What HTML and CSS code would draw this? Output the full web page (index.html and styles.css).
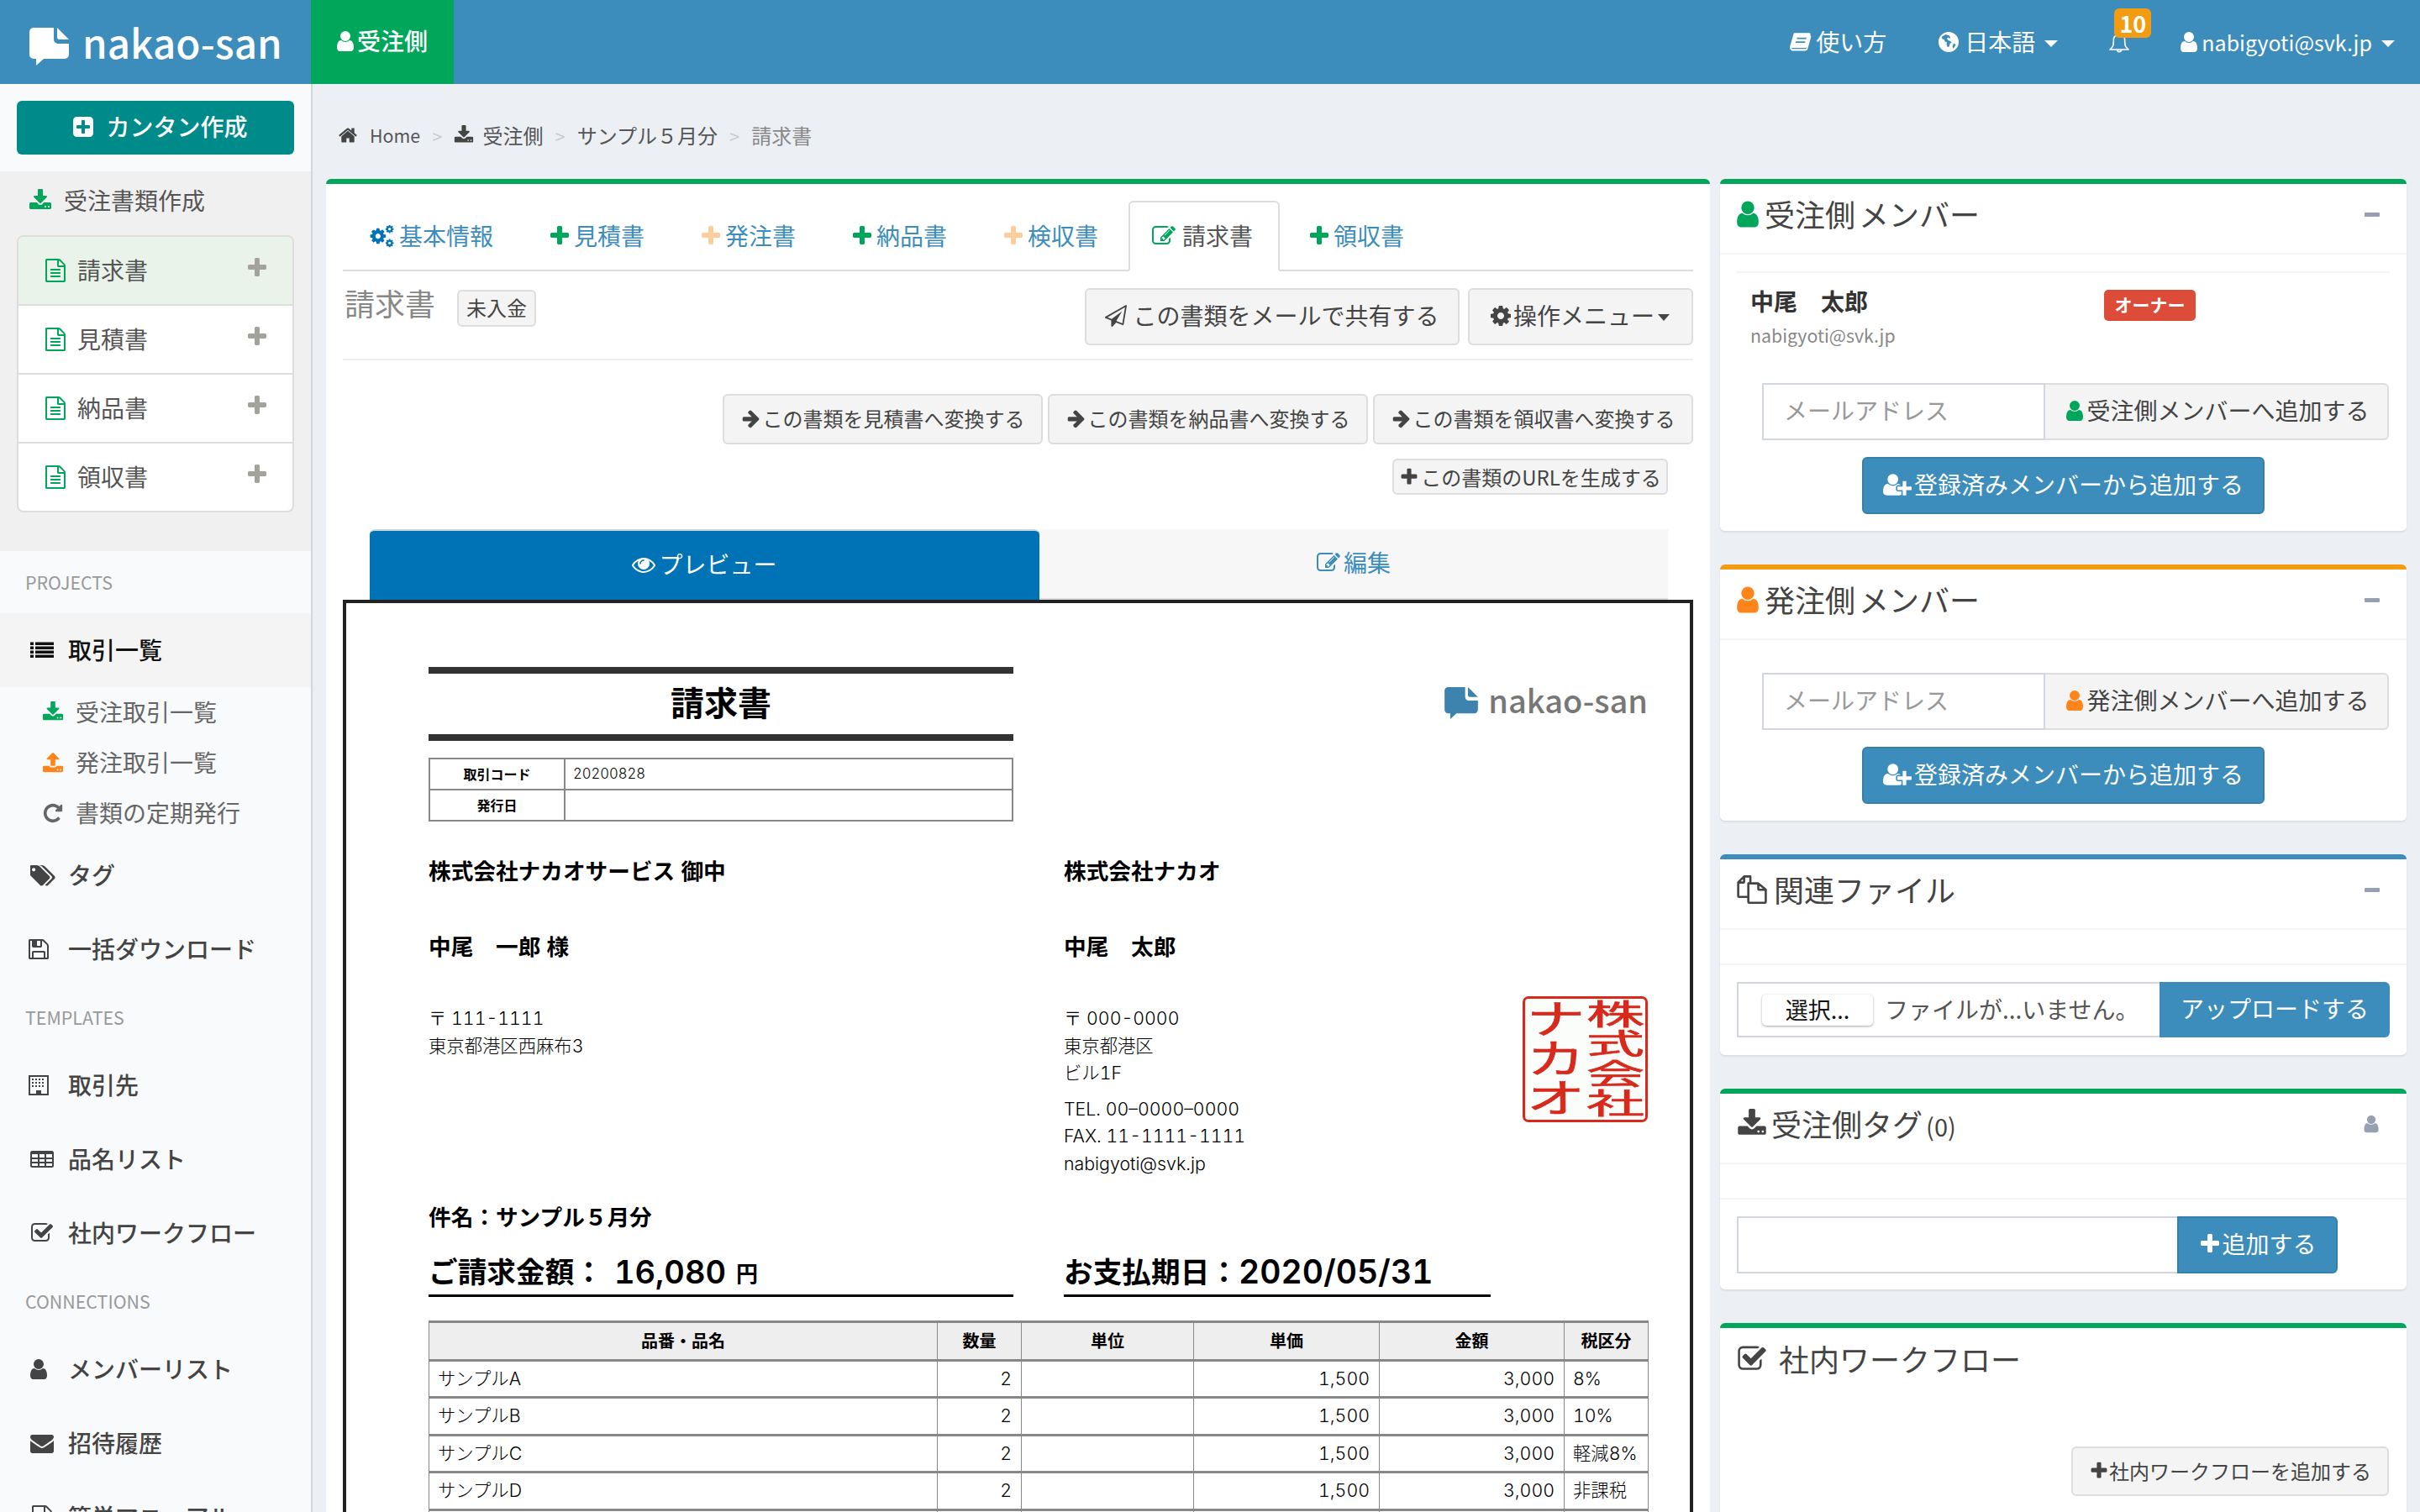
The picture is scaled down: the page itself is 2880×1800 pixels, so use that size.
FILE: index.html
```html
<!DOCTYPE html>
<html lang="ja">
<head>
<meta charset="utf-8">
<title>nakao-san</title>
<link rel="stylesheet" href="styles.css">
</head>
<body>
<svg class="sprite" xmlns="http://www.w3.org/2000/svg">
<symbol id="user" viewBox="0 0 1792 1792"><path d="M1536 1399q0 109-62.500 187t-150.500 78h-854q-88 0-150.500-78t-62.500-187q0-85 8.500-160.500t31.500-152 58.500-131 94-89 134.500-34.500q131 128 313 128t313-128q76 0 134.500 34.500t94 89 58.500 131 31.500 152 8.500 160.500zm-256-887q0 159-112.500 271.500t-271.500 112.500-271.500-112.500-112.500-271.500 112.500-271.500 271.500-112.500 271.500 112.500 112.500 271.500z"/></symbol>
<symbol id="plus" viewBox="0 0 1792 1792"><path d="M1600 736v192q0 40-28 68t-68 28h-416v416q0 40-28 68t-68 28h-192q-40 0-68-28t-28-68v-416h-416q-40 0-68-28t-28-68v-192q0-40 28-68t68-28h416v-416q0-40 28-68t68-28h192q40 0 68 28t28 68v416h416q40 0 68 28t28 68z"/></symbol>
<symbol id="arrow" viewBox="0 0 1792 1792"><path d="M1600 960q0 54-37 91l-651 651q-39 37-91 37-51 0-90-37l-75-75q-38-38-38-91t38-91l293-293h-704q-52 0-84.500-37.500t-32.500-90.500v-128q0-53 32.500-90.500t84.500-37.500h704l-293-294q-38-36-38-90t38-90l75-75q38-38 90-38 53 0 91 38l651 651q37 35 37 90z"/></symbol>
<symbol id="home" viewBox="0 0 1792 1792"><path d="M1472 992v480q0 26-19 45t-45 19h-384v-384h-256v384h-384q-26 0-45-19t-19-45v-480q0-1 .5-3t.5-3l575-474 575 474q1 2 1 6zm223-69l-62 74q-8 9-21 11h-3q-13 0-21-7l-692-577-692 577q-12 8-24 7-13-2-21-11l-62-74q-8-10-7-23.500t11-21.500l719-599q32-26 76-26t76 26l244 204v-195q0-14 9-23t23-9h192q14 0 23 9t9 23v408l219 182q10 8 11 21.500t-7 23.500z"/></symbol>
<symbol id="download" viewBox="0 0 1792 1792"><path d="M1344 1344q0-26-19-45t-45-19-45 19-19 45 19 45 45 19 45-19 19-45zm256 0q0-26-19-45t-45-19-45 19-19 45 19 45 45 19 45-19 19-45zm128-224v320q0 40-28 68t-68 28h-1472q-40 0-68-28t-28-68v-320q0-40 28-68t68-28h465l135 136q58 56 136 56t136-56l136-136h464q40 0 68 28t28 68zm-325-569q17 41-14 70l-448 448q-18 19-45 19t-45-19l-448-448q-31-29-14-70 17-39 59-39h256v-448q0-26 19-45t45-19h256q26 0 45 19t19 45v448h256q42 0 59 39z"/></symbol>
<symbol id="upload" viewBox="0 0 1792 1792"><path d="M1344 1472q0-26-19-45t-45-19-45 19-19 45 19 45 45 19 45-19 19-45zm256 0q0-26-19-45t-45-19-45 19-19 45 19 45 45 19 45-19 19-45zm128-224v320q0 40-28 68t-68 28h-1472q-40 0-68-28t-28-68v-320q0-40 28-68t68-28h427q21 56 70.500 92t110.500 36h256q61 0 110.500-36t70.500-92h427q40 0 68 28t28 68zm-325-648q-17 40-59 40h-256v448q0 26-19 45t-45 19h-256q-26 0-45-19t-19-45v-448h-256q-42 0-59-40-17-39 14-69l448-448q18-19 45-19t45 19l448 448q31 30 14 69z"/></symbol>
<symbol id="list" viewBox="0 0 1792 1792"><path d="M0 288h256v224H0zM384 288h1408v224H384zM0 608h256v224H0zM384 608h1408v224H384zM0 928h256v224H0zM384 928h1408v224H384zM0 1248h256v224H0zM384 1248h1408v224H384z"/></symbol>
<symbol id="repeat" viewBox="0 0 1792 1792"><path d="M1664 256v448q0 26-19 45t-45 19h-448q-42 0-59-40-17-39 14-69l138-138q-148-137-349-137-104 0-198.500 40.500t-163.500 109.500-109.500 163.500-40.500 198.500 40.500 198.500 109.500 163.500 163.500 109.500 198.500 40.500q119 0 225-52t179-147q7-10 23-12 15 0 25 9l137 138q9 8 9.500 20.500t-7.500 22.500q-109 132-264 204.500t-327 72.500q-156 0-298-61t-245-164-164-245-61-298 61-298 164-245 245-164 298-61q147 0 284.500 55.500t244.500 156.500l130-129q29-31 70-14 39 17 39 59z"/></symbol>
<symbol id="tags" viewBox="0 0 1920 1792"><path d="M384 448q0-53-37.500-90.500t-90.500-37.500-90.500 37.500-37.500 90.500 37.500 90.500 90.500 37.500 90.500-37.500 37.500-90.500zm1067 576q0 53-37 90l-491 492q-39 37-91 37-53 0-90-37l-715-716q-38-37-64.500-101t-26.500-117v-416q0-52 38-90t90-38h416q53 0 117 26.500t102 64.500l715 714q37 39 37 91zm384 0q0 53-37 90l-491 492q-39 37-91 37-36 0-59-14t-53-45l470-470q37-37 37-90 0-52-37-91l-715-714q-38-38-102-64.500t-117-26.500h224q53 0 117 26.500t102 64.500l715 714q37 39 37 91z"/></symbol>
<symbol id="save" viewBox="0 0 1792 1792"><path d="M512 1536h768v-384h-768v384zm896 0h128v-896q0-14-10-38.500t-20-34.500l-281-281q-10-10-34-20t-39-10v416q0 40-28 68t-68 28h-576q-40 0-68-28t-28-68v-416h-128v1280h128v-416q0-40 28-68t68-28h832q40 0 68 28t28 68v416zm-384-928v-320q0-13-9.500-22.500t-22.500-9.500h-192q-13 0-22.500 9.500t-9.500 22.500v320q0 13 9.500 22.500t22.500 9.500h192q13 0 22.500-9.500t9.500-22.500zm640 32v928q0 40-28 68t-68 28h-1344q-40 0-68-28t-28-68v-1344q0-40 28-68t68-28h928q40 0 88 20t76 48l280 280q28 28 48 76t20 88z"/></symbol>
<symbol id="building" viewBox="0 0 1792 1792"><path fill-rule="evenodd" d="M128 128h1536v1536H128zM256 256v1280h448v-256h384v256h448V256zM384 384h128v128H384zM640 384h128v128H640zM896 384h128v128H896zM1152 384h128v128h-128zM384 640h128v128H384zM640 640h128v128H640zM896 640h128v128H896zM1152 640h128v128h-128zM384 896h128v128H384zM640 896h128v128H640zM896 896h128v128H896zM1152 896h128v128h-128z"/></symbol>
<symbol id="table" viewBox="0 0 1792 1792"><path fill-rule="evenodd" d="M160 256h1472q160 0 160 160v960q0 160-160 160H160q-160 0-160-160V416q0-160 160-160zM128 512v256h448V512zM704 512v256h384V512zM1216 512v256h448V512zM128 896v192h448V896zM704 896v192h384V896zM1216 896v192h448V896zM128 1216v192h448v-192zM704 1216v192h384v-192zM1216 1216v192h448v-192z"/></symbol>
<symbol id="check" viewBox="0 0 1792 1792"><path d="M1472 930v318q0 119-84.500 203.500t-203.500 84.500h-832q-119 0-203.500-84.500t-84.500-203.500v-832q0-119 84.500-203.500t203.500-84.500h832q63 0 117 25 15 7 18 23 3 17-9 29l-49 49q-10 10-23 10-3 0-9-2-23-6-45-6h-832q-66 0-113 47t-47 113v832q0 66 47 113t113 47h832q66 0 113-47t47-113v-254q0-13 9-22l64-64q10-10 23-10 6 0 12 3 20 8 20 29zm231-489l-814 814q-24 24-57 24t-57-24l-430-430q-24-24-24-57t24-57l110-110q24-24 57-24t57 24l263 263 647-647q24-24 57-24t57 24l110 110q24 24 24 57t-24 57z"/></symbol>
<symbol id="envelope" viewBox="0 0 1792 1792"><path d="M1792 710v794q0 66-47 113t-113 47h-1472q-66 0-113-47t-47-113v-794q44 49 101 87 362 246 497 345 57 42 92.500 65.500t94.500 48 110 24.500h2q51 0 110-24.500t94.500-48 92.500-65.500q170-123 498-345 57-39 100-87zm0-294q0 79-49 151t-122 123q-376 261-468 325-10 7-42.500 30.500t-54 38-52 32.500-57.500 27-50 9h-2q-23 0-50-9t-57.500-27-52-32.500-54-38-42.500-30.500q-91-64-262-182.500t-205-142.500q-62-42-117-115.500t-55-136.500q0-78 41.500-130t118.500-52h1472q65 0 112.500 47t47.500 113z"/></symbol>
<symbol id="gear" viewBox="0 0 1792 1792"><path d="M1152 896q0-106-75-181t-181-75-181 75-75 181 75 181 181 75 181-75 75-181zm512-109v222q0 12-8 23t-20 13l-185 28q-19 54-39 91 35 50 107 138 10 12 10 25t-9 23q-27 37-99 108t-94 71q-12 0-26-9l-138-108q-44 23-91 38-16 136-29 186-7 28-36 28h-222q-14 0-24.500-8.500t-11.500-21.500l-28-184q-49-16-90-37l-141 107q-10 9-25 9-14 0-25-11-126-114-165-168-7-10-7-23 0-12 8-23 15-21 51-66.500t54-70.500q-27-50-41-99l-183-27q-13-2-21-12.500t-8-23.500v-222q0-12 8-23t19-13l186-28q14-46 39-92-40-57-107-138-10-12-10-24 0-10 9-23 26-36 98.500-107.500t94.500-71.500q13 0 26 10l138 107q44-23 91-38 16-136 29-186 7-28 36-28h222q14 0 24.500 8.500t11.500 21.500l28 184q49 16 90 37l142-107q9-9 24-9 13 0 25 10 129 119 165 170 7 8 7 22 0 12-8 23-15 21-51 66.500t-54 70.500q26 50 41 98l183 28q13 2 21 12.500t8 23.500z"/></symbol>
<symbol id="cogs" viewBox="0 0 1920 1792"><use href="#gear" width="1300" height="1300" x="0" y="250"/><use href="#gear" width="680" height="680" x="1140" y="60"/><use href="#gear" width="680" height="680" x="1140" y="1060"/></symbol>
<symbol id="file" viewBox="0 0 1792 1792"><path d="M1596 380q28 28 48 76t20 88v1152q0 40-28 68t-68 28h-1344q-40 0-68-28t-28-68v-1600q0-40 28-68t68-28h896q40 0 88 20t76 48zm-444-244v376h376q-10-29-22-41l-313-313q-12-12-41-22zm384 1528v-1024h-416q-40 0-68-28t-28-68v-416h-768v1536h1280zm-1024-864q0-14 9-23t23-9h704q14 0 23 9t9 23v64q0 14-9 23t-23 9h-704q-14 0-23-9t-9-23v-64zm736 224q14 0 23 9t9 23v64q0 14-9 23t-23 9h-704q-14 0-23-9t-9-23v-64q0-14 9-23t23-9h704zm0 256q14 0 23 9t9 23v64q0 14-9 23t-23 9h-704q-14 0-23-9t-9-23v-64q0-14 9-23t23-9h704z"/></symbol>
<symbol id="edit" viewBox="0 0 1792 1792"><path d="M888 1184l116-116-152-152-116 116v56h96v96h56zm440-720q-16-16-33 1l-350 350q-17 17-1 33t33-1l350-350q17-17 1-33zm80 594v190q0 119-84.500 203.500t-203.500 84.500h-832q-119 0-203.500-84.500t-84.500-203.500v-832q0-119 84.500-203.500t203.500-84.500h832q63 0 117 25 15 7 18 23 3 17-9 29l-49 49q-14 14-32 8-23-6-45-6h-832q-66 0-113 47t-47 113v832q0 66 47 113t113 47h832q66 0 113-47t47-113v-126q0-13 9-22l64-64q15-15 35-7t20 29zm-96-738l288 288-672 672h-288v-288zm444 132l-92 92-288-288 92-92q27-27 68-27t68 27l152 152q27 27 27 68t-27 68z"/></symbol>
<symbol id="plane" viewBox="0 0 1792 1792"><path d="M1764 11q33 24 27 64l-256 1536q-5 29-32 45-14 8-31 8-11 0-24-5l-527-215-298 327q-18 21-47 21-14 0-23-4-19-7-30-23.500t-11-36.500v-452l-472-193q-37-14-40-55-3-39 32-59l1664-960q35-21 68 2zm-342 1499l221-1323-1434 827 336 137 863-639-478 797z"/></symbol>
<symbol id="eye" viewBox="0 0 1792 1792"><path d="M1664 960q-152-236-381-353 61 104 61 225 0 185-131.500 316.500t-316.500 131.500-316.500-131.500-131.500-316.500q0-121 61-225-229 117-381 353 133 205 333.500 326.500t434.500 121.500 434.500-121.500 333.500-326.500zm-720-384q0-20-14-34t-34-14q-125 0-214.500 89.500t-89.500 214.500q0 20 14 34t34 14 34-14 14-34q0-86 61-147t147-61q20 0 34-14t14-34zm848 384q0 34-20 69-140 230-376.500 368.500t-499.500 138.500-499.500-139-376.500-368q-20-35-20-69t20-69q140-229 376.500-368t499.500-139 499.500 139 376.500 368q20 35 20 69z"/></symbol>
<symbol id="plus-square" viewBox="0 0 1792 1792"><path d="M1408 960v-128q0-26-19-45t-45-19h-320v-320q0-26-19-45t-45-19h-128q-26 0-45 19t-19 45v320h-320q-26 0-45 19t-19 45v128q0 26 19 45t45 19h320v320q0 26 19 45t45 19h128q26 0 45-19t19-45v-320h320q26 0 45-19t19-45zm256-544v960q0 119-84.500 203.500t-203.500 84.500h-960q-119 0-203.500-84.500t-84.500-203.500v-960q0-119 84.500-203.500t203.500-84.500h960q119 0 203.500 84.500t84.500 203.500z"/></symbol>
<symbol id="user-plus" viewBox="0 0 2048 1792"><path d="M704 896q-159 0-271.500-112.500t-112.500-271.500 112.500-271.500 271.500-112.500 271.500 112.500 112.500 271.500-112.500 271.500-271.500 112.500zm960 128h352q13 0 22.500 9.500t9.500 22.500v192q0 13-9.500 22.500t-22.500 9.500h-352v352q0 13-9.500 22.500t-22.500 9.500h-192q-13 0-22.500-9.500t-9.500-22.500v-352h-352q-13 0-22.500-9.500t-9.500-22.500v-192q0-13 9.500-22.500t22.500-9.500h352v-352q0-13 9.500-22.500t22.500-9.500h192q13 0 22.500 9.500t9.500 22.500v352zm-736 224q0 52 38 90t90 38h256v238q-68 50-171 50h-874q-121 0-194-69.500t-73-189.500q0-53 3.500-103.500t14-109 26.500-108.500 43-97.500 62-81 85.500-53.500 111.500-20q19 0 39 17 79 61 154.500 91.500t164.500 30.500 164.500-30.500 154.500-91.500q20-17 39-17 132 0 217 96h-223q-52 0-90 38t-38 90v192z"/></symbol>
<symbol id="book" viewBox="0 0 1792 1792"><path d="M420 210h1120q70 0 90 40t0 100l-260 900q-30 100-130 100H260q-40 0-55 30t20 50l1040 0q50 0 70-50l290-990q60 30 60 110l-260 930q-40 130-170 130H260q-130 0-170-130t0-240l240-830q30-150 90-150zM620 560l-30 110h720l30-110zM530 850l-30 110h720l30-110z"/></symbol>
<symbol id="globe" viewBox="0 0 1792 1792"><path fill-rule="evenodd" d="M896 128a768 768 0 1 1 0 1536a768 768 0 0 1 0-1536zM700 320q-200 60-340 210l60 140 140 40 60 150 150 70-30 170 90 200 110-70 60-210 130-110-140-90-130-60-90-130 110-80 70 70 80-50-60-150-120-40zM1300 1000l-110 180 40 210q150-110 210-300z"/></symbol>
<symbol id="bell" viewBox="0 0 1792 1792"><path fill="none" stroke="currentColor" stroke-width="110" stroke-linejoin="round" d="M896 180q-110 0-120 130-340 80-340 420 0 400-80 560-50 90-230 230h1540q-180-140-230-230-80-160-80-560 0-340-340-420-10-130-120-130z"/><path fill="none" stroke="currentColor" stroke-width="110" d="M720 1520a176 176 0 0 0 352 0"/></symbol>
<symbol id="files" viewBox="0 0 1792 1792"><path fill="none" stroke="currentColor" stroke-width="130" stroke-linejoin="round" d="M800 530V120H430L80 470v800q0 60 60 60h540M800 120v0M430 120v300q0 60-60 60H80M800 530h470L1712 900v720q0 60-60 60H740q-60 0-60-60V530zM1270 530v320q0 60 60 60h382"/></symbol>
</svg>

<header class="topbar">
  <a class="brand">
    <svg class="brand-mark" viewBox="0 0 47 45"><path d="M5 0H29V14a5 5 0 0 0 5 5H47V32a5 5 0 0 1-5 5H17L8 45V37H5a5 5 0 0 1-5-5V5a5 5 0 0 1 5-5Z"/><path d="M33 0 47 14H36a3 3 0 0 1-3-3Z"/></svg>
    <span class="brand-name">nakao-san</span>
  </a>
  <a class="side-tab"><svg class="i nudge"><use href="#user"/></svg><span>受注側</span></a>
  <nav class="top-menu">
    <a class="top-item"><svg class="i book-ic"><use href="#book"/></svg><span>使い方</span></a>
    <a class="top-item"><svg class="i globe-ic"><use href="#globe"/></svg><span>日本語</span><i class="caret"></i></a>
    <a class="top-item bell"><svg class="i bell-ic"><use href="#bell"/></svg><span class="bell-badge">10</span></a>
    <a class="top-item"><svg class="i nudge"><use href="#user"/></svg><span class="top-mail">nabigyoti@svk.jp</span><i class="caret"></i></a>
  </nav>
</header>

<div class="layout">
  <aside class="sidebar">
    <div class="create-wrap"><a class="create-btn"><svg class="i"><use href="#plus-square"/></svg><span>カンタン作成</span></a></div>
    <div class="doc-menu">
      <div class="doc-menu-title"><svg class="i green"><use href="#download"/></svg><span>受注書類作成</span></div>
      <ul class="doc-list">
        <li class="doc-item current"><svg class="i green"><use href="#file"/></svg><span>請求書</span><svg class="i doc-plus"><use href="#plus"/></svg></li>
        <li class="doc-item"><svg class="i green"><use href="#file"/></svg><span>見積書</span><svg class="i doc-plus"><use href="#plus"/></svg></li>
        <li class="doc-item"><svg class="i green"><use href="#file"/></svg><span>納品書</span><svg class="i doc-plus"><use href="#plus"/></svg></li>
        <li class="doc-item"><svg class="i green"><use href="#file"/></svg><span>領収書</span><svg class="i doc-plus"><use href="#plus"/></svg></li>
      </ul>
    </div>
    <div class="nav-label">PROJECTS</div>
    <a class="nav-row active"><span class="nav-ic"><svg class="i"><use href="#list"/></svg></span><span>取引一覧</span></a>
    <a class="sub-row"><span class="sub-ic green"><svg class="i"><use href="#download"/></svg></span><span>受注取引一覧</span></a>
    <a class="sub-row"><span class="sub-ic orange"><svg class="i"><use href="#upload"/></svg></span><span>発注取引一覧</span></a>
    <a class="sub-row"><span class="sub-ic"><svg class="i"><use href="#repeat"/></svg></span><span>書類の定期発行</span></a>
    <a class="nav-row"><span class="nav-ic"><svg class="i tag-ic"><use href="#tags"/></svg></span><span>タグ</span></a>
    <a class="nav-row"><span class="nav-ic"><svg class="i nudge-s"><use href="#save"/></svg></span><span>一括ダウンロード</span></a>
    <div class="nav-label">TEMPLATES</div>
    <a class="nav-row"><span class="nav-ic"><svg class="i nudge-s"><use href="#building"/></svg></span><span>取引先</span></a>
    <a class="nav-row"><span class="nav-ic"><svg class="i"><use href="#table"/></svg></span><span>品名リスト</span></a>
    <a class="nav-row"><span class="nav-ic"><svg class="i"><use href="#check"/></svg></span><span>社内ワークフロー</span></a>
    <div class="nav-label">CONNECTIONS</div>
    <a class="nav-row"><span class="nav-ic"><svg class="i nudge"><use href="#user"/></svg></span><span>メンバーリスト</span></a>
    <a class="nav-row"><span class="nav-ic"><svg class="i"><use href="#envelope"/></svg></span><span>招待履歴</span></a>
    <a class="nav-row"><span class="nav-ic"><svg class="i"><use href="#file"/></svg></span><span>簡単マニュアル</span></a>
  </aside>

  <main class="main">
    <div class="crumbs">
      <svg class="i crumb-home"><use href="#home"/></svg><span class="crumb-latin">Home</span><b class="sep">&gt;</b>
      <svg class="i crumb-dl"><use href="#download"/></svg><span>受注側</span><b class="sep">&gt;</b>
      <span>サンプル５月分</span><b class="sep">&gt;</b>
      <span class="crumb-last">請求書</span>
    </div>
    <div class="columns">
      <section class="panel">
        <ul class="tabs">
          <li class="tab"><svg class="i cogs-ic"><use href="#cogs"/></svg><span>基本情報</span></li>
          <li class="tab"><svg class="i green"><use href="#plus"/></svg><span>見積書</span></li>
          <li class="tab"><svg class="i peach"><use href="#plus"/></svg><span>発注書</span></li>
          <li class="tab"><svg class="i green"><use href="#plus"/></svg><span>納品書</span></li>
          <li class="tab"><svg class="i peach"><use href="#plus"/></svg><span>検収書</span></li>
          <li class="tab on"><svg class="i green edit-ic"><use href="#edit"/></svg><span>請求書</span></li>
          <li class="tab"><svg class="i green"><use href="#plus"/></svg><span>領収書</span></li>
        </ul>
        <div class="title-row">
          <div class="title-left"><h2 class="doc-title">請求書</h2><span class="state">未入金</span></div>
          <div class="title-actions">
            <a class="btn btn-share"><svg class="i"><use href="#plane"/></svg><span>この書類をメールで共有する</span></a>
            <a class="btn btn-menu"><svg class="i"><use href="#gear"/></svg><span>操作メニュー</span><i class="caret dark"></i></a>
          </div>
        </div>
        <div class="convert-row">
          <a class="btn btn-conv"><svg class="i"><use href="#arrow"/></svg><span>この書類を見積書へ変換する</span></a>
          <a class="btn btn-conv"><svg class="i"><use href="#arrow"/></svg><span>この書類を納品書へ変換する</span></a>
          <a class="btn btn-conv"><svg class="i"><use href="#arrow"/></svg><span>この書類を領収書へ変換する</span></a>
        </div>
        <div class="url-row"><a class="btn btn-url"><svg class="i"><use href="#plus"/></svg><span>この書類のURLを生成する</span></a></div>
        <div class="view-tabs">
          <a class="view-tab preview"><svg class="i"><use href="#eye"/></svg><span>プレビュー</span></a>
          <a class="view-tab editing"><svg class="i"><use href="#edit"/></svg><span>編集</span></a>
        </div>
        <article class="sheet">
          <div class="sheet-head">
            <div>
              <h1 class="sheet-title">請求書</h1>
              <table class="meta">
                <tr><th>取引コード</th><td>20200828</td></tr>
                <tr><th>発行日</th><td></td></tr>
              </table>
            </div>
            <div class="sheet-logo">
              <svg class="sheet-mark" viewBox="0 0 47 45"><path d="M5 0H29V14a5 5 0 0 0 5 5H47V32a5 5 0 0 1-5 5H17L8 45V37H5a5 5 0 0 1-5-5V5a5 5 0 0 1 5-5Z"/><path d="M33 0 47 14H36a3 3 0 0 1-3-3Z"/></svg>
              <span>nakao-san</span>
            </div>
          </div>
          <div class="parties">
            <div>
              <p class="strong company">株式会社ナカオサービス 御中</p>
              <p class="strong person">中尾　一郎 様</p>
              <p class="addr">〒 111-1111<br>東京都港区西麻布3</p>
            </div>
            <div>
              <p class="strong company">株式会社ナカオ</p>
              <p class="strong person">中尾　太郎</p>
              <div class="sender">
                <div>
                  <p class="addr">〒 000-0000<br>東京都港区<br>ビル1F</p>
                  <p class="addr tel">TEL. 00–0000–0000<br>FAX. 11-1111-1111<br>nabigyoti@svk.jp</p>
                </div>
                <svg class="stamp" viewBox="0 0 149 150">
                  <g class="stamp-l">
                    <text transform="translate(2 43) scale(1.5 1)">ナ</text>
                    <text transform="translate(2 92) scale(1.5 1)">カ</text>
                    <text transform="translate(2 141) scale(1.5 1)">オ</text>
                  </g>
                  <g class="stamp-r">
                    <text transform="translate(76 32) scale(2 1)">株</text>
                    <text transform="translate(76 69) scale(2 1)">式</text>
                    <text transform="translate(76 106) scale(2 1)">会</text>
                    <text transform="translate(76 143) scale(2 1)">社</text>
                  </g>
                </svg>
              </div>
            </div>
          </div>
          <p class="strong subject">件名：サンプル５月分</p>
          <div class="totals">
            <div class="total"><span>ご請求金額：</span><span class="num amount">16,080</span><span class="yen">円</span></div>
            <div class="total due"><span>お支払期日：</span><span class="num">2020/05/31</span></div>
          </div>
          <table class="items">
            <colgroup><col class="c1"><col class="c2"><col class="c3"><col class="c4"><col class="c5"><col class="c6"></colgroup>
            <tr><th>品番・品名</th><th>数量</th><th>単位</th><th>単価</th><th>金額</th><th>税区分</th></tr>
            <tr><td>サンプルA</td><td class="r">2</td><td></td><td class="r">1,500</td><td class="r">3,000</td><td>8%</td></tr>
            <tr><td>サンプルB</td><td class="r">2</td><td></td><td class="r">1,500</td><td class="r">3,000</td><td>10%</td></tr>
            <tr><td>サンプルC</td><td class="r">2</td><td></td><td class="r">1,500</td><td class="r">3,000</td><td>軽減8%</td></tr>
            <tr><td>サンプルD</td><td class="r">2</td><td></td><td class="r">1,500</td><td class="r">3,000</td><td>非課税</td></tr>
            <tr><td>&nbsp;</td><td></td><td></td><td></td><td></td><td></td></tr>
          </table>
        </article>
      </section>

      <div class="side-col">
        <section class="box green-top">
          <div class="box-head"><svg class="i head-user green"><use href="#user"/></svg><h3>受注側 メンバー</h3><i class="minus"></i></div>
          <div class="box-body">
            <div class="rule"></div>
            <div class="member">
              <div class="member-info"><div class="member-name">中尾　太郎</div><div class="member-mail">nabigyoti@svk.jp</div></div>
              <span class="owner">オーナー</span>
            </div>
            <div class="add-group">
              <input class="add-input" placeholder="メールアドレス">
              <a class="add-btn"><svg class="i nudge green"><use href="#user"/></svg><span>受注側メンバーへ追加する</span></a>
            </div>
            <a class="btn-blue"><svg class="i up-ic"><use href="#user-plus"/></svg><span>登録済みメンバーから追加する</span></a>
          </div>
        </section>
        <section class="box orange-top">
          <div class="box-head"><svg class="i head-user orange"><use href="#user"/></svg><h3>発注側 メンバー</h3><i class="minus"></i></div>
          <div class="box-body tight">
            <div class="add-group">
              <input class="add-input" placeholder="メールアドレス">
              <a class="add-btn"><svg class="i nudge orange"><use href="#user"/></svg><span>発注側メンバーへ追加する</span></a>
            </div>
            <a class="btn-blue"><svg class="i up-ic"><use href="#user-plus"/></svg><span>登録済みメンバーから追加する</span></a>
          </div>
        </section>
        <section class="box blue-top">
          <div class="box-head"><svg class="i head-files"><use href="#files"/></svg><h3>関連ファイル</h3><i class="minus"></i></div>
          <div class="box-gap"></div>
          <div class="box-foot">
            <div class="file-group">
              <div class="file-field"><span class="file-choose">選択...</span><span class="file-name">ファイルが...いません。</span></div>
              <a class="upload">アップロードする</a>
            </div>
          </div>
        </section>
        <section class="box green-top">
          <div class="box-head"><svg class="i head-dl"><use href="#download"/></svg><h3>受注側タグ <span class="count">(0)</span></h3><svg class="i head-right"><use href="#user"/></svg></div>
          <div class="box-gap"></div>
          <div class="box-foot tag-foot">
            <div class="tag-group"><input class="tag-input"><a class="tag-add"><svg class="i"><use href="#plus"/></svg><span>追加する</span></a></div>
          </div>
        </section>
        <section class="box green-top last">
          <div class="box-head plain"><svg class="i head-check"><use href="#check"/></svg><h3>社内ワークフロー</h3></div>
          <div class="flow-foot"><a class="btn btn-flow"><svg class="i"><use href="#plus"/></svg><span>社内ワークフローを追加する</span></a></div>
        </section>
      </div>
    </div>
  </main>
</div>
</body>
</html>
```

FILE: styles.css
```css
* { box-sizing: border-box; }
html, body { margin: 0; padding: 0; }
body {
  width: 2880px; height: 1800px; overflow: hidden;
  background: #ecf0f5; color: #444;
  font-family: "Noto Sans CJK JP", "Noto Sans", sans-serif;
  font-size: 28px; line-height: 1.4;
}
a { color: inherit; text-decoration: none; }
h1, h2, h3, p, ul { margin: 0; padding: 0; }
ul { list-style: none; }
.sprite { display: none; }
.i { width: 1em; height: 1em; flex: none; fill: currentColor; display: block; }
.green { color: #00a65a; }
.orange { color: #ff851b; }
.peach { color: #ffcc9c; }
.nudge { margin-left: -4px; margin-right: 0; }
.nudge-s { margin-left: -4px; }

/* top bar */
.topbar { display: flex; align-items: stretch; height: 100px; background: #3c8dbc; color: #fff; }
.brand { width: 370px; flex: none; display: flex; align-items: center; padding: 0 0 0 35px; }
.brand-mark { width: 47px; height: 45px; fill: #fff; margin-top: 10px; }
.brand-name { margin-left: 16px; font-size: 47.6px; font-weight: 500; line-height: 1; }
.side-tab { width: 170px; flex: none; background: #00a65a; display: flex; align-items: center; justify-content: center; font-weight: 500; padding-bottom: 2px; }
.top-menu { margin-left: auto; display: flex; align-items: center; gap: 60px; padding: 0 30px 0 0; }
.top-item { display: flex; align-items: center; position: relative; }
.book-ic { margin-right: 4px; }
.globe-ic { margin-right: 5px; }
.caret { display: block; width: 0; height: 0; margin-left: 11px; margin-top: 4px; border-left: 8px solid transparent; border-right: 8px solid transparent; border-top: 8px solid #fff; }
.caret.dark { border-top-color: #444; margin-left: 4px; border-left-width: 7px; border-right-width: 7px; }
.bell { width: 26px; height: 30px; }
.bell-ic { width: 26px; height: 26px; }
.bell-badge { position: absolute; left: 7px; top: -25px; width: 44px; height: 35px; background: #f39c12; border-radius: 6px; font-size: 27px; font-weight: 700; line-height: 35px; text-align: center; }
.top-mail { margin-left: 1px; font-size: 25px; }

/* sidebar */
.layout { display: flex; align-items: flex-start; }
.sidebar { width: 372px; height: 1700px; flex: none; overflow: hidden; background: #f9fafc; border-right: 2px solid #d2d6de; }
.create-wrap { padding: 20px 20px; height: 104px; }
.create-btn { height: 64px; display: flex; align-items: center; justify-content: center; gap: 13px; background: #008b8b; color: #fff; border-radius: 6px; font-weight: 500; padding: 0 0 2px 10px; }
.doc-menu { height: 452px; background: #f0f0f0; padding: 0 20px; }
.doc-menu-title { height: 76px; display: flex; align-items: center; padding: 0 0 6px 14px; gap: 14px; color: #555; }
.doc-list { border: 2px solid #ddd; border-radius: 8px; background: #fff; overflow: hidden; }
.doc-item { height: 82px; display: flex; align-items: center; padding: 0 30px 0 30px; border-bottom: 2px solid #ddd; color: #555; }
.doc-item:last-child { border-bottom: 0; height: 80px; }
.doc-item.current { background: #eaf3ea; }
.doc-item > span { margin-left: 12px; }
.doc-plus { margin-left: auto; color: #a3a39b; margin-top: -6px; margin-right: -2px; }
.nav-label { height: 74px; display: flex; align-items: center; padding-left: 30px; font-size: 21.4px; color: #999; }
.nav-row { height: 88px; display: flex; align-items: center; padding-left: 36px; font-weight: 500; color: #444; }
.nav-row.active { background: #f4f4f4; color: #111; }
.nav-ic { width: 45px; flex: none; display: block; }
.tag-ic { width: 31px; height: 31px; }
.sub-row { height: 60px; display: flex; align-items: center; padding-left: 50px; color: #666; }
.sub-ic { width: 40px; flex: none; }
.sub-ic .i { width: 26px; height: 26px; }

/* main */
.main { flex: 1; min-width: 0; padding: 0 16px; }
.crumbs { height: 113px; display: flex; align-items: center; padding: 9px 0 0 14px; font-size: 24px; color: #555; }
.crumb-latin { font-size: 21.4px; }
.crumb-home { width: 24px; height: 24px; margin-right: 14px; color: #444; }
.crumb-dl { width: 24px; height: 24px; margin-right: 10px; color: #444; }
.sep { font-weight: 400; color: #ccc; font-size: 22px; margin: 0 14px; }
.crumb-last { color: #888; }
.columns { display: grid; grid-template-columns: 1647px 817px; column-gap: 12px; align-items: start; }

.panel { background: #fff; border-top: 6px solid #00a65a; border-radius: 6px 6px 0 0; padding: 20px 20px 0; height: 1600px; overflow: hidden; }
.tabs { display: flex; gap: 4px; height: 84px; border-bottom: 2px solid #ddd; color: #3c8dbc; }
.tab { height: 84px; display: flex; align-items: center; padding: 0 32px 0 29px; }
.tab .i { margin-right: 3px; }
.tab.on { background: #fff; border: 2px solid #ddd; border-bottom-color: #fff; border-radius: 6px 6px 0 0; color: #555; padding: 0 30px 0 26px; }
.tab .cogs-ic { width: 32px; height: 32px; color: #0073b7; margin-right: 4px; margin-left: 2px; }
.tab .edit-ic { margin-right: 8px; }
.title-row { display: flex; justify-content: space-between; padding: 20px 0 16px; border-bottom: 2px solid #eee; }
.title-left { display: flex; align-items: flex-start; }
.doc-title { font-size: 36px; line-height: 34px; font-weight: 400; color: #888; margin: 0 0 0 2px; }
.state { margin: 2px 0 0 26px; height: 44px; width: 94px; display: flex; align-items: center; justify-content: center; padding-bottom: 2px; font-size: 24px; background: #f4f4f4; border: 2px solid #ddd; border-radius: 6px; }
.title-actions { display: flex; gap: 10px; }
.btn { display: inline-flex; align-items: center; justify-content: center; background: #f4f4f4; border: 2px solid #ddd; border-radius: 6px; color: #444; white-space: nowrap; }
.btn-share, .btn-menu { height: 68px; }
.btn-share { width: 446px; padding-bottom: 2px; }
.btn-menu { width: 268px; padding: 0 3px 2px 0; }
.btn-share .i { width: 26px; height: 26px; margin-right: 7px; }
.btn-menu .i { margin-right: 1px; }
.convert-row { display: flex; justify-content: flex-end; gap: 6px; margin-top: 40px; }
.btn-conv { width: 381px; height: 60px; font-size: 24px; gap: 2px; padding-bottom: 2px; }
.btn-conv .i, .btn-url .i, .btn-flow .i { width: 24px; height: 24px; }
.url-row { display: flex; justify-content: flex-end; margin-top: 17px; padding-right: 30px; }
.btn-url { width: 328px; height: 43px; font-size: 24px; gap: 2px; }
.view-tabs { display: grid; grid-template-columns: 797px 748px; margin: 41px 30px 0 32px; height: 84px; }
.view-tab { display: flex; align-items: center; justify-content: center; gap: 4px; padding-bottom: 2px; }
.preview { background: #0073b7; color: #fff; border-top: 2px solid #cfd6dc; border-radius: 6px 6px 0 0; }
.editing { background: #f7f7f7; color: #3c8dbc; border-bottom: 2px solid #ddd; }

/* invoice sheet */
.sheet { border: 4px solid #222; background: #fff; padding: 76px 50px 0 98px; color: #000; font-family: "Inter", "Noto Sans CJK JP", sans-serif; font-variant-numeric: tabular-nums; }
.sheet-head { display: grid; grid-template-columns: 696px 695px; column-gap: 60px; }
.sheet-title { height: 88px; border-top: 8px solid #333; border-bottom: 8px solid #333; font-size: 40px; line-height: 72px; font-weight: 700; text-align: center; }
.meta { width: 100%; margin-top: 20px; border-collapse: collapse; table-layout: fixed; }
.meta th, .meta td { height: 37px; border: 2px solid #888; padding: 0; font-size: 16px; line-height: 1; }
.meta th { width: 161px; font-weight: 700; }
.meta td { padding-left: 9px; font-size: 16.6px; font-weight: 300; }
.sheet-logo { display: flex; justify-content: flex-end; align-items: flex-start; padding-top: 24px; color: #777; font-family: "Noto Sans CJK JP", sans-serif; font-size: 38px; font-weight: 500; line-height: 30px; }
.sheet-mark { width: 40px; height: 38px; fill: #3c84ad; margin-right: 12px; }
.parties { display: grid; grid-template-columns: 696px 695px; column-gap: 60px; margin-top: 39px; }
.strong { font-weight: 700; font-size: 26.67px; line-height: 40px; }
.person { margin-top: 50px; }
.addr { margin-top: 49px; font-size: 21.33px; line-height: 32.5px; font-weight: 300; }
.addr.tel { margin-top: 10px; }
.sender { display: flex; justify-content: space-between; align-items: flex-start; }
.stamp { margin-top: 39px; width: 149px; height: 150px; flex: none; display: block; background: #fbfdfa; border: 3px solid #d8291c; border-radius: 7px; fill: #d8291c; stroke: #d8291c; stroke-width: .7px; font-family: "Noto Sans CJK JP", sans-serif; }
.stamp-l { font-size: 48px; }
.stamp-r { font-size: 36px; }
.subject { margin-top: 28px; }
.totals { display: grid; grid-template-columns: 696px 508px; column-gap: 60px; margin-top: 3px; }
.total { height: 72px; border-bottom: 3px solid #000; display: flex; align-items: center; font-size: 34.67px; font-weight: 700; white-space: nowrap; padding-top: 16px; }
.num { font-size: 39px; font-weight: 600; }
.num.amount { margin-left: 13px; font-size: 38px; }
.yen { font-size: 26px; margin-left: 12px; padding-top: 6px; }
.items { width: 1451px; margin-top: 28px; border-collapse: collapse; table-layout: fixed; }
.c1 { width: 605px; } .c2 { width: 100px; } .c3 { width: 205px; } .c4 { width: 221px; } .c5 { width: 220px; } .c6 { width: 100px; }
.items th, .items td { border-top: 3px solid #888; border-bottom: 3px solid #888; border-left: 1px solid #888; border-right: 1px solid #888; height: 44.4px; padding: 0 10px; font-size: 21.33px; line-height: 1; font-weight: 300; }
.items th { background: #eee; font-weight: 700; text-align: center; height: 46px; font-size: 20px; }
.items td.r { text-align: right; padding: 0 11px 0 0; }

/* right column */
.side-col { display: flex; flex-direction: column; gap: 40px; }
.box { background: #fff; border-top: 6px solid #00a65a; border-radius: 6px; box-shadow: 0 2px 2px rgba(0,0,0,.08); }
.green-top { border-top-color: #00a65a; }
.orange-top { border-top-color: #f39c12; }
.blue-top { border-top-color: #3c8dbc; }
.box.last { border-radius: 6px 6px 0 0; height: 400px; }
.box-head { height: 84px; display: flex; align-items: center; padding: 0 32px 10px 20px; border-bottom: 2px solid #f4f4f4; font-size: 36px; }
.box-head.plain { border-bottom: 0; }
.box-head h3 { font-size: 36px; font-weight: 400; line-height: 1.2; white-space: nowrap; word-spacing: -4px; }
.head-user { width: 36px; height: 36px; margin-left: -5px; margin-right: 2px; }
.head-files { width: 36px; height: 36px; margin-right: 8px; }
.head-dl { width: 36px; height: 36px; margin-right: 5px; }
.head-check { width: 36px; height: 36px; margin-right: 14px; }
.head-right { width: 24px; height: 24px; margin-left: auto; margin-right: -2px; color: #97a0b3; }
.count { font-size: 29px; }
.minus { display: block; width: 18px; height: 5px; margin-left: auto; background: #97a0b3; border-radius: 1px; }
.box-body { padding: 20px 20px 20px; }
.box-body.tight { padding-top: 39px; }
.rule { height: 2px; background: #f4f4f4; }
.member { display: flex; padding: 13px 0 0 16px; }
.member-info { width: 421px; flex: none; }
.member-name { font-weight: 700; line-height: 40px; color: #333; }
.member-mail { font-size: 21.3px; color: #888; line-height: 40px; margin-top: 1px; }
.owner { align-self: flex-start; margin-top: 7px; width: 109px; height: 37px; background: #dd4b39; border-radius: 5px; color: #fff; font-size: 21px; font-weight: 700; line-height: 35px; text-align: center; }
.add-group { display: flex; height: 68px; margin: 37px 0 0 30px; width: 746px; }
.tight .add-group { margin-top: 0; }
.add-input { width: 337px; flex: none; border: 2px solid #d2d6de; padding: 0 24px 2px; font: inherit; outline: 0; background: #fff; color: #444; border-radius: 0; }
.add-input::placeholder { color: #999; opacity: 1; }
.add-btn { flex: 1; display: flex; align-items: center; justify-content: center; background: #f4f4f4; border: 2px solid #ddd; border-left: 0; border-radius: 0 6px 6px 0; padding: 0 0 2px 4px; }
.btn-blue { display: flex; align-items: center; justify-content: center; width: 479px; height: 68px; margin: 20px auto 0; background: #3c8dbc; color: #fff; border: 2px solid #367fa9; border-radius: 6px; padding-bottom: 2px; }
.up-ic { width: 34px; height: 30px; margin-right: 3px; }
.box-gap { height: 42px; border-bottom: 2px solid #f4f4f4; }
.box-foot { padding: 20px 20px 21px; }
.box-foot.tag-foot { padding-bottom: 19px; }
.file-group { display: flex; height: 66px; }
.file-field { flex: 1; display: flex; align-items: center; border: 2px solid #d2d6de; border-right: 0; padding-left: 28px; }
.file-choose { width: 132px; height: 37px; display: flex; align-items: center; justify-content: center; background: #fff; border-radius: 5px; box-shadow: 0 1px 3px rgba(0,0,0,.35); color: #111; font-size: 27px; }
.file-name { margin-left: 14px; color: #555; white-space: nowrap; }
.upload { width: 274px; flex: none; background: #3c8dbc; color: #fff; display: flex; align-items: center; justify-content: center; border-radius: 0 6px 6px 0; padding-bottom: 2px; }
.tag-group { display: flex; height: 68px; width: 715px; }
.tag-input { flex: 1; min-width: 0; border: 2px solid #d2d6de; border-right: 0; outline: 0; background: #fff; border-radius: 0; }
.tag-add { width: 191px; flex: none; display: flex; align-items: center; justify-content: center; background: #3c8dbc; border: 2px solid #367fa9; color: #fff; border-radius: 0 6px 6px 0; padding-bottom: 2px; }
.flow-foot { display: flex; justify-content: flex-end; padding: 57px 21px 0 0; }
.btn-flow { width: 378px; height: 59px; font-size: 24px; gap: 0; padding-bottom: 2px; }
```
